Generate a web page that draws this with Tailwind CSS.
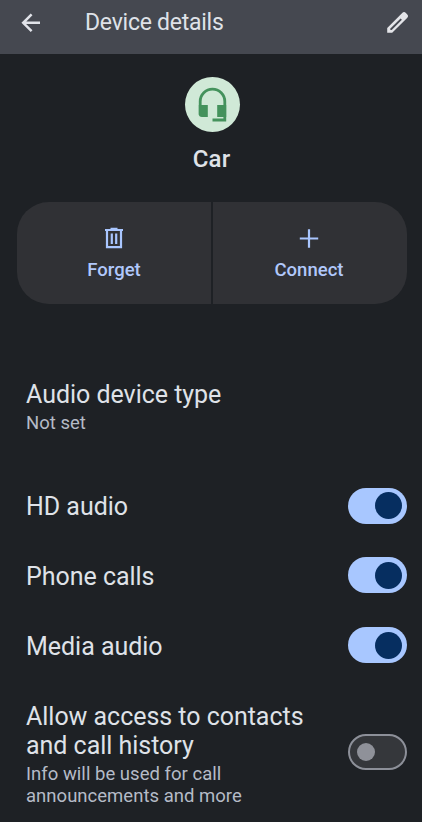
<!DOCTYPE html>
<html lang="en">
<head>
<meta charset="utf-8">
<title>Device details</title>
<script src="https://cdn.jsdelivr.net/npm/@tailwindcss/browser@4"></script>
</head>
<body class="bg-[#1e2125]">
<div class="flex h-[822px] w-[422px] flex-col overflow-hidden bg-[#1e2125] font-[Roboto,sans-serif] text-[#dfe2e8]">
  <header class="flex h-[54px] shrink-0 items-start bg-[#454850]">
    <svg class="mt-[13px] ml-[21px] h-5 w-5 shrink-0" viewBox="0 0 20 20" fill="none" stroke="#e1e3e9" stroke-width="2.5"><path d="M19 9.8H2.5M10.6 1.4 2.2 9.8l8.4 8.4"/></svg>
    <h1 class="mt-[8px] ml-[44px] text-[23px] leading-[30px] tracking-[-0.25px] whitespace-nowrap">Device details</h1>
    <svg class="mt-[11px] mr-[13px] ml-auto h-[23px] w-[23px]" viewBox="0 0 23 23"><path d="M1.2 17 16.2 2a2.6 2.6 0 0 1 3.7 0l1.2 1.2a2.6 2.6 0 0 1 0 3.7L6.2 21.8H1.2Z" fill="#e3e4e8"/><path d="M4.3 19 4.4 17.6 14.6 7.4 15.9 8.7 5.7 18.9Z" fill="#454850"/></svg>
  </header>
  <section class="flex flex-col items-center pl-[2px]">
    <div class="mt-[23px] flex h-[55px] w-[55px] items-center justify-center rounded-full bg-[#d0e9d7]">
      <svg class="h-[55px] w-[55px]" viewBox="0 0 55 55"><path d="M15.2 38V24.5a12.3 12.3 0 0 1 24.6 0V43H27.5" fill="none" stroke="#44925c" stroke-width="2.8"/><path d="M13.8 28h9V40H17a3.2 3.2 0 0 1-3.2-3.2ZM32.2 28h9V40H32.2Z" fill="#44925c"/></svg>
    </div>
    <h2 class="mt-3 pr-px text-[24px] leading-[30px] font-medium tracking-[0.2px]">Car</h2>
  </section>
  <div class="mt-[28px] ml-[17px] flex h-[102px] w-[390px] shrink-0 gap-[2px] text-[18.5px] leading-6 font-medium text-[#b0c8fb]">
    <button class="flex w-[194px] flex-col items-center rounded-l-[32px] bg-[#303135] pt-[25px]">
      <svg class="h-[23px] w-5" viewBox="0 0 20 23" fill="none" stroke="#a9c6ff" stroke-width="2.2"><path d="M1 3h18M6.5 1.9h7M3 3v17.2h14V3M7.8 6.5v10.5M12.2 6.5v10.5"/></svg>
      <span class="mt-2">Forget</span>
    </button>
    <button class="flex w-[194px] flex-col items-center rounded-r-[32px] bg-[#303135] pt-[25px] pr-[2px]">
      <svg class="h-[23px] w-5" viewBox="0 0 20 23" fill="none" stroke="#a9c6ff" stroke-width="2.2"><path d="M.8 11.5h18.4M10 2.3v18.4"/></svg>
      <span class="mt-2">Connect</span>
    </button>
  </div>
  <main class="flex flex-col pr-[15px] pl-[26px] text-[25px] leading-[29px] tracking-[-0.03px]">
    <div class="mt-[76px] h-[57px]">
      <p>Audio device type</p>
      <p class="text-[18.5px] leading-[29px] tracking-[0.02px] text-[#b5bbc7]">Not set</p>
    </div>
    <div class="mt-[34px] flex h-[70px] items-center justify-between"><span>HD audio</span>
      <span class="-mt-px flex h-[36px] w-[59px] items-center justify-end rounded-full bg-[#a8c7ff] pr-[5px]"><span class="h-[27px] w-[27px] rounded-full bg-[#062e60]"></span></span></div>
    <div class="flex h-[70px] items-center justify-between"><span>Phone calls</span>
      <span class="-mt-[2px] flex h-[36px] w-[59px] items-center justify-end rounded-full bg-[#a8c7ff] pr-[5px]"><span class="h-[27px] w-[27px] rounded-full bg-[#062e60]"></span></span></div>
    <div class="flex h-[70px] items-center justify-between"><span>Media audio</span>
      <span class="-mt-[2px] flex h-[36px] w-[59px] items-center justify-end rounded-full bg-[#a8c7ff] pr-[5px]"><span class="h-[27px] w-[27px] rounded-full bg-[#062e60]"></span></span></div>
    <div class="mt-[21px] flex justify-between">
      <div>
        <p>Allow access to contacts<br>and call history</p>
        <p class="mt-[3px] text-[18.5px] leading-[22px] tracking-[0.02px] text-[#b5bbc7]">Info will be used for call<br>announcements and more</p>
      </div>
      <span class="mt-[32px] flex h-[36px] w-[59px] items-center rounded-full border-2 border-[#8d9099] bg-[#35373b] pl-[7px]"><span class="h-[18px] w-[18px] rounded-full bg-[#8f9199]"></span></span>
    </div>
  </main>
</div>
</body>
</html>
